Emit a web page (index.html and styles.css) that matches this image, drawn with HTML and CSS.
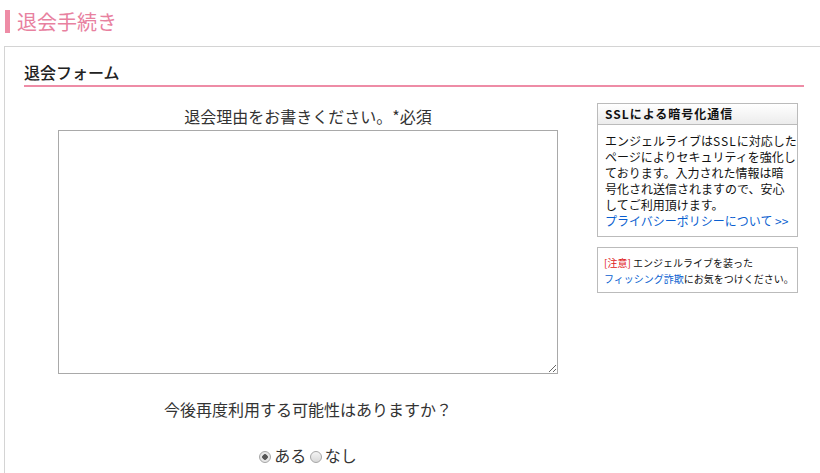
FILE: index.html
```html
<!DOCTYPE html>
<html lang="ja">
<head>
    <meta charset="UTF-8">
    <title>退会手続き</title>
    <link rel="stylesheet" href="styles.css">
</head>
<body>
    <h1 class="page-title">退会手続き</h1>
    <div class="panel">
        <h2 class="section-title">退会フォーム</h2>
        <div class="columns">
            <form class="main">
                <p class="label">退会理由をお書きください。*必須</p>
                <textarea class="reason"></textarea>
                <p class="question">今後再度利用する可能性はありますか？</p>
                <div class="choices">
                    <label><input type="radio" name="again" checked>ある</label>
                    <label><input type="radio" name="again">なし</label>
                </div>
            </form>
            <aside class="side">
                <div class="box">
                    <div class="box-head">SSLによる暗号化通信</div>
                    <div class="box-body">
                        エンジェルライブは<span class="ssl">SSL</span>に対応した<br>
                        ページによりセキュリティを強化し<br>
                        ております。入力された情報は暗<br>
                        号化され送信されますので、安心<br>
                        してご利用頂けます。<br>
                        <a href="#">プライバシーポリシーについて &gt;&gt;</a>
                    </div>
                </div>
                <div class="box notice">
                    <span class="warn">[注意]</span> エンジェルライブを装った<br>
                    <a href="#">フィッシング詐欺</a>にお気をつけください。
                </div>
            </aside>
        </div>
    </div>
</body>
</html>
```

FILE: styles.css
```css
* {
    box-sizing : border-box;
}

body {
    margin : 0;
    background-color : #fff;
    color : #333;
    font-family : "Noto Sans CJK JP", "Noto Sans", sans-serif;
}

.page-title {
    margin : 10px 0 0 5px;
    height : 23px;
    border-left : 5px solid #ee8ca6;
    padding-left : 7px;
    color : #e8819f;
    font-size : 20px;
    font-weight : normal;
    line-height : 23px;
}

.panel {
    margin : 13px 0 0 4px;
    border : 1px solid #d4d4d4;
    border-right : none;
    border-bottom : none;
    padding : 0 16px 0 19px;
    height : 430px;
}

.section-title {
    margin : 16px 0 0;
    padding-bottom : 3px;
    border-bottom : 2px solid #ee8ca6;
    color : #222;
    font-size : 16px;
    font-weight : 500;
    line-height : 19px;
}

.columns {
    display : flex;
    gap : 5px;
}

.main {
    width : 568px;
    text-align : center;
}

.label {
    margin : 19px 0 0;
    font-size : 16px;
    line-height : 20px;
}

.reason {
    display : block;
    width : 500px;
    height : 244px;
    margin : 4px auto 0;
    border : 1px solid #a9a9a9;
    resize : both;
}

.question {
    margin : 24px 0 0;
    font-size : 16px;
    line-height : 22px;
}

.choices {
    margin-top : 25px;
    font-size : 16px;
    line-height : 20px;
}

.choices input {
    appearance : none;
    display : inline-block;
    width : 12px;
    height : 12px;
    margin : 0 3px 0 0;
    border : 1px solid #a6a6a6;
    border-radius : 50%;
    background : linear-gradient(#f4f4f4, #d8d8d8);
    vertical-align : -1px;
}

.choices input:checked {
    background : radial-gradient(circle, #555 0, #555 2.5px, #e6e6e6 3px);
}

.side {
    width : 201px;
    padding-top : 16px;
}

.box {
    border : 1px solid #bbb;
    margin-bottom : 10px;
    font-size : 12px;
    color : #111;
    white-space : nowrap;
}

.box-head {
    height : 21px;
    padding-left : 7px;
    border-bottom : 1px solid #bbb;
    background : linear-gradient(#fff, #ececec);
    font-weight : bold;
    letter-spacing : 1px;
    line-height : 20px;
}

.box-body {
    padding : 8px 4px 7px 7px;
    line-height : 16px;
}

.ssl {
    letter-spacing : 1px;
}

.box a {
    color : #0a5fd0;
    text-decoration : none;
}

.notice {
    padding : 7px 4px 5px 6px;
    font-size : 10px;
    line-height : 16px;
}

.warn {
    color : #e02020;
}
```
